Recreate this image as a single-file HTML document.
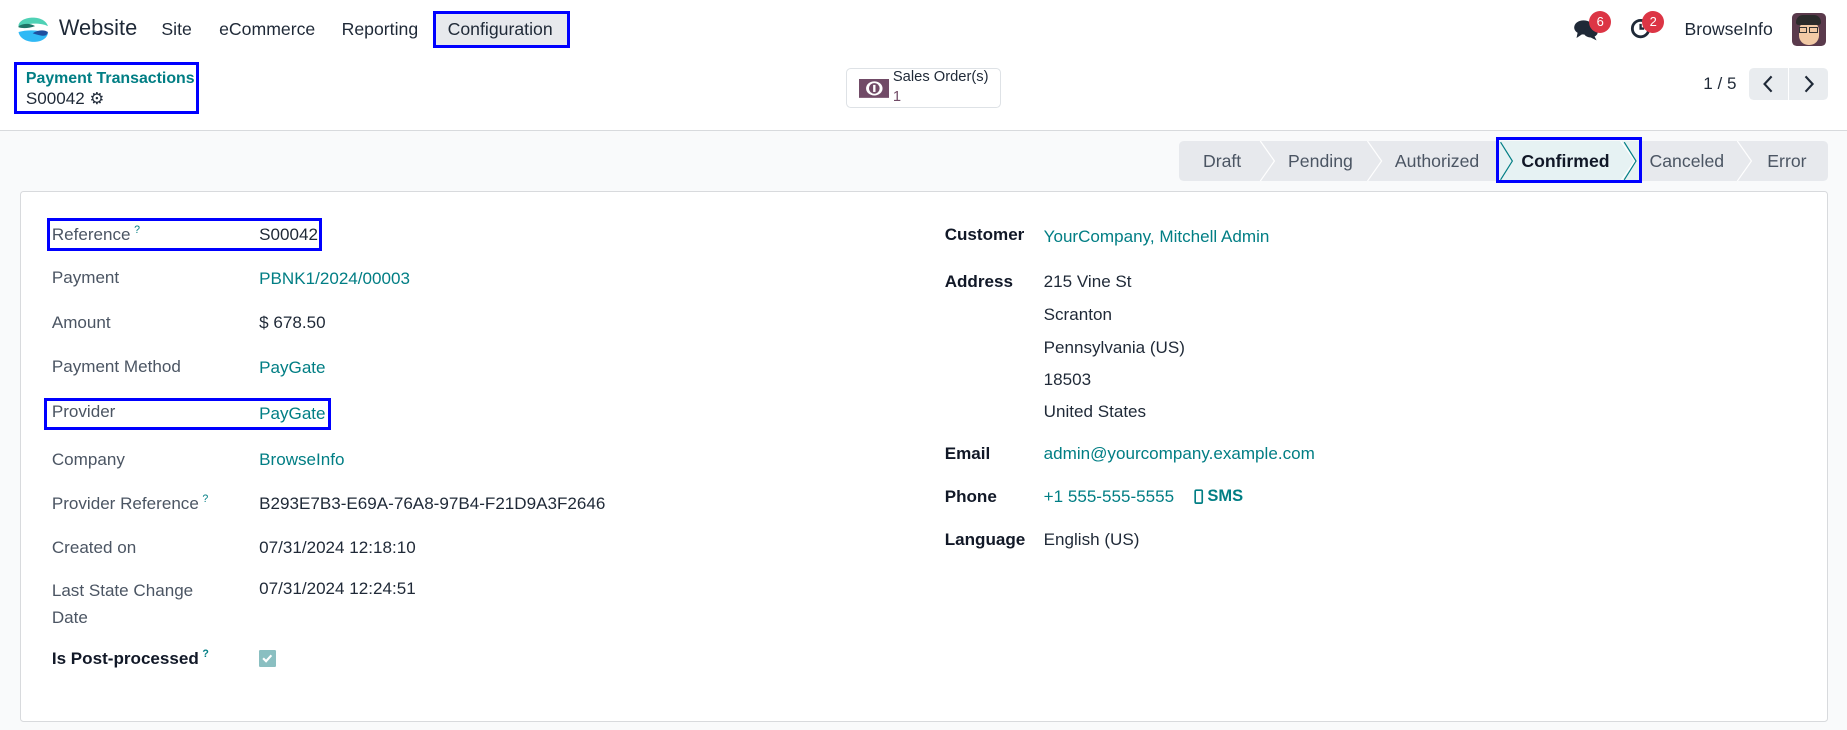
<!DOCTYPE html>
<html><head><meta charset="utf-8">
<style>
html,body{margin:0;padding:0;}
body{width:1568px;height:620px;zoom:1.17793;overflow:hidden;background:#fff;font-family:"Liberation Sans",sans-serif;color:#374151;position:relative;}
.a{position:absolute;white-space:nowrap;line-height:20px;}
.nav{font-size:15px;color:#1f2937;}
.lbl{font-size:14.5px;color:#4b5563;}
.val{font-size:14.5px;color:#1f2937;}
.rl{font-size:14.5px;color:#111827;font-weight:bold;}
.teal{color:#017e84 !important;}
.box{position:absolute;border:3px solid #0000ff;box-sizing:border-box;}
.sb{position:absolute;top:120px;height:34px;line-height:34px;font-size:15px;color:#4b5563;text-align:center;}
.q{font-size:9px;color:#017e84;position:relative;top:-6px;margin-left:3px;line-height:0;}
</style></head><body>
<svg class="a" style="left:13px;top:10px" width="30" height="30" viewBox="0 0 30 30">
<path d="M3 11 C5 3,25 2,28 12 C22 9,10 9,3 13Z" fill="#4fd1b5"/>
<path d="M3 12 C8 9,14 10,17 12 C12 14,6 14,3 13Z" fill="#1f7668"/>
<path d="M3 17 C10 15,20 15,28 18 C26 28,5 28,3 17Z" fill="#30b9f5"/>
<path d="M15 18 C20 15,25 15,28 17 C27 21,24 21,15 18Z" fill="#1e4fa0"/>
</svg>
<div class="a nav" style="left:50px;top:14px;font-size:18.5px;">Website</div>
<div class="a nav" style="left:137px;top:15px;">Site</div>
<div class="a nav" style="left:186px;top:15px;">eCommerce</div>
<div class="a nav" style="left:290px;top:15px;">Reporting</div>
<div style="position:absolute;left:369px;top:10px;width:114px;height:29px;background:#e7e9ed;"></div>
<div class="box" style="left:368px;top:9px;width:116px;height:32px;"></div>
<div class="a nav" style="left:380px;top:15px;">Configuration</div>
<svg class="a" style="left:1335px;top:15px" width="24" height="20" viewBox="0 0 24 20"><ellipse cx="9" cy="8" rx="8" ry="6" fill="#1f2937"/><path d="M4 12 L3 17 L9 13Z" fill="#1f2937"/><ellipse cx="15" cy="12" rx="6" ry="4.5" fill="#1f2937"/><path d="M18 15 L20 19 L14 16Z" fill="#1f2937"/></svg>
<div class="a" style="left:1349px;top:9px;width:19px;height:19px;border-radius:50%;background:#dc3545;color:#fff;font-size:11px;line-height:19px;text-align:center;">6</div>
<svg class="a" style="left:1384px;top:15px" width="18" height="18" viewBox="0 0 18 18"><circle cx="9" cy="9" r="7" fill="none" stroke="#1f2937" stroke-width="2.4"/><path d="M9 5 V9 H12" fill="none" stroke="#1f2937" stroke-width="2"/></svg>
<div class="a" style="left:1394px;top:9px;width:19px;height:19px;border-radius:50%;background:#dc3545;color:#fff;font-size:11px;line-height:19px;text-align:center;">2</div>
<div class="a nav" style="left:1430px;top:15px;">BrowseInfo</div>
<div class="a" style="left:1521px;top:11px;width:29px;height:28px;border-radius:4px;background:#5a3a4c;overflow:hidden;">
<div style="position:absolute;left:6px;top:7px;width:17px;height:20px;border-radius:8px;background:#f1c9a5;"></div>
<div style="position:absolute;left:4px;top:2px;width:21px;height:8px;border-radius:6px 6px 2px 2px;background:#2b2b2b;"></div>
<div style="position:absolute;left:6px;top:12px;width:7px;height:5px;border:1.5px solid #333;box-sizing:border-box;"></div>
<div style="position:absolute;left:15px;top:12px;width:7px;height:5px;border:1.5px solid #333;box-sizing:border-box;"></div>
</div>
<div class="box" style="left:12px;top:53px;width:157px;height:44px;"></div>
<div class="a teal" style="left:22px;top:57px;font-size:13.5px;font-weight:bold;">Payment Transactions</div>
<div class="a" style="left:22px;top:74px;font-size:14.5px;color:#1f2937;">S00042 <span style="font-size:14px;">&#9881;</span></div>
<div style="position:absolute;left:718px;top:58px;width:132px;height:34px;border:1px solid #dee2e6;border-radius:4px;box-sizing:border-box;"></div>
<svg class="a" style="left:729px;top:67px" width="26" height="16" viewBox="0 0 26 16"><rect x="0" y="0" width="26" height="16" fill="#714b67"/><ellipse cx="13" cy="8" rx="7" ry="6" fill="#fff"/><circle cx="13" cy="8" r="4.5" fill="#714b67"/><rect x="12" y="5" width="2" height="6" fill="#fff"/></svg>
<div class="a" style="left:758px;top:58px;font-size:12.5px;line-height:16px;color:#1f2937;">Sales Order(s)</div>
<div class="a" style="left:758px;top:75px;font-size:12.5px;line-height:16px;color:#714b67;">1</div>
<div class="a" style="left:1446px;top:61px;font-size:14.5px;color:#1f2937;">1 / 5</div>
<div style="position:absolute;left:1485px;top:58px;width:33px;height:27px;background:#e9ecef;border-radius:4px 0 0 4px;"></div>
<div style="position:absolute;left:1519px;top:58px;width:33px;height:27px;background:#e9ecef;border-radius:0 4px 4px 0;"></div>
<svg class="a" style="left:1495px;top:63px" width="12" height="17" viewBox="0 0 12 17"><path d="M9 2 L3 8.5 L9 15" fill="none" stroke="#1f2937" stroke-width="1.8"/></svg>
<svg class="a" style="left:1530px;top:63px" width="12" height="17" viewBox="0 0 12 17"><path d="M3 2 L9 8.5 L3 15" fill="none" stroke="#1f2937" stroke-width="1.8"/></svg>
<div style="position:absolute;left:0;top:110px;width:1568px;height:1px;background:#d8dadd;"></div>
<div style="position:absolute;left:0;top:111px;width:1568px;height:509px;background:#f9fafb;"></div>
<div style="position:absolute;left:1001px;top:120px;width:551px;height:34px;background:#e7e9ed;border-radius:4px;"></div>
<div style="position:absolute;left:1272px;top:120px;width:120px;height:34px;background:#e6f2f3;"></div>
<svg class="a" style="left:1001px;top:120px" width="551" height="34" viewBox="0 0 551 34">
<g fill="none" stroke="#ffffff" stroke-width="1">
<path d="M69 0 L81 17 L69 34"/><path d="M160 0 L172 17 L160 34"/><path d="M375 0 L387 17 L375 34"/><path d="M474 0 L486 17 L474 34"/>
</g>
<g fill="none" stroke="#017e84" stroke-width="1"><path d="M273 1 L283 17 L273 33"/><path d="M378 1 L388 17 L378 33"/></g>
</svg>
<div class="sb" style="left:1001px;width:73px;">Draft</div>
<div class="sb" style="left:1078px;width:86px;">Pending</div>
<div class="sb" style="left:1170px;width:100px;">Authorized</div>
<div class="sb" style="left:1280px;width:98px;color:#111827;font-weight:bold;">Confirmed</div>
<div class="sb" style="left:1392px;width:80px;">Canceled</div>
<div class="sb" style="left:1484px;width:66px;">Error</div>
<div class="box" style="left:1270px;top:116px;width:124px;height:39px;"></div>
<div style="position:absolute;left:17px;top:162px;width:1535px;height:451px;background:#fff;border:1px solid #d8dadd;border-radius:3px;box-sizing:border-box;"></div>
<div class="box" style="left:40px;top:185px;width:233px;height:28px;"></div>
<div class="box" style="left:37px;top:338px;width:244px;height:27px;"></div>
<div class="a lbl" style="left:44px;top:189px;">Reference<span class="q">?</span></div>
<div class="a val" style="left:220px;top:189px;">S00042</div>
<div class="a lbl" style="left:44px;top:226px;">Payment</div>
<div class="a val teal" style="left:220px;top:227px;">PBNK1/2024/00003</div>
<div class="a lbl" style="left:44px;top:264px;">Amount</div>
<div class="a val" style="left:220px;top:264px;">$ 678.50</div>
<div class="a lbl" style="left:44px;top:301px;">Payment Method</div>
<div class="a val teal" style="left:220px;top:302px;">PayGate</div>
<div class="a lbl" style="left:44px;top:340px;">Provider</div>
<div class="a val teal" style="left:220px;top:341px;">PayGate</div>
<div class="a lbl" style="left:44px;top:380px;">Company</div>
<div class="a val teal" style="left:220px;top:380px;">BrowseInfo</div>
<div class="a lbl" style="left:44px;top:418px;">Provider Reference<span class="q">?</span></div>
<div class="a val" style="left:220px;top:418px;">B293E7B3-E69A-76A8-97B4-F21D9A3F2646</div>
<div class="a lbl" style="left:44px;top:455px;">Created on</div>
<div class="a val" style="left:220px;top:455px;">07/31/2024 12:18:10</div>
<div class="a lbl" style="left:44px;top:490px;line-height:23px;white-space:normal;width:140px;">Last State Change Date</div>
<div class="a val" style="left:220px;top:490px;">07/31/2024 12:24:51</div>
<div class="a rl" style="left:44px;top:549px;">Is Post-processed<span class="q">?</span></div>
<div class="a" style="left:220px;top:552px;width:14px;height:14px;background:#8abfc1;border-radius:1px;"><svg width="14" height="14" viewBox="0 0 14 14" style="display:block"><path d="M3.5 7 L6 9.5 L10.5 4.5" fill="none" stroke="#fff" stroke-width="1.8"/></svg></div>
<div class="a rl" style="left:802px;top:189px;">Customer</div>
<div class="a val teal" style="left:886px;top:191px;">YourCompany, Mitchell Admin</div>
<div class="a rl" style="left:802px;top:229px;">Address</div>
<div class="a val" style="left:886px;top:229px;">215 Vine St</div>
<div class="a val" style="left:886px;top:257px;">Scranton</div>
<div class="a val" style="left:886px;top:285px;">Pennsylvania (US)</div>
<div class="a val" style="left:886px;top:312px;">18503</div>
<div class="a val" style="left:886px;top:340px;">United States</div>
<div class="a rl" style="left:802px;top:375px;">Email</div>
<div class="a val teal" style="left:886px;top:375px;">admin@yourcompany.example.com</div>
<div class="a rl" style="left:802px;top:412px;">Phone</div>
<div class="a val teal" style="left:886px;top:412px;">+1 555-555-5555</div>
<svg class="a" style="left:1014px;top:415px" width="8" height="13" viewBox="0 0 8 13"><rect x="1" y="1" width="6" height="11" rx="1" fill="none" stroke="#017e84" stroke-width="1.4"/></svg>
<div class="a teal" style="left:1025px;top:412px;font-size:14px;font-weight:bold;">SMS</div>
<div class="a rl" style="left:802px;top:448px;">Language</div>
<div class="a val" style="left:886px;top:448px;">English (US)</div>
</body></html>
